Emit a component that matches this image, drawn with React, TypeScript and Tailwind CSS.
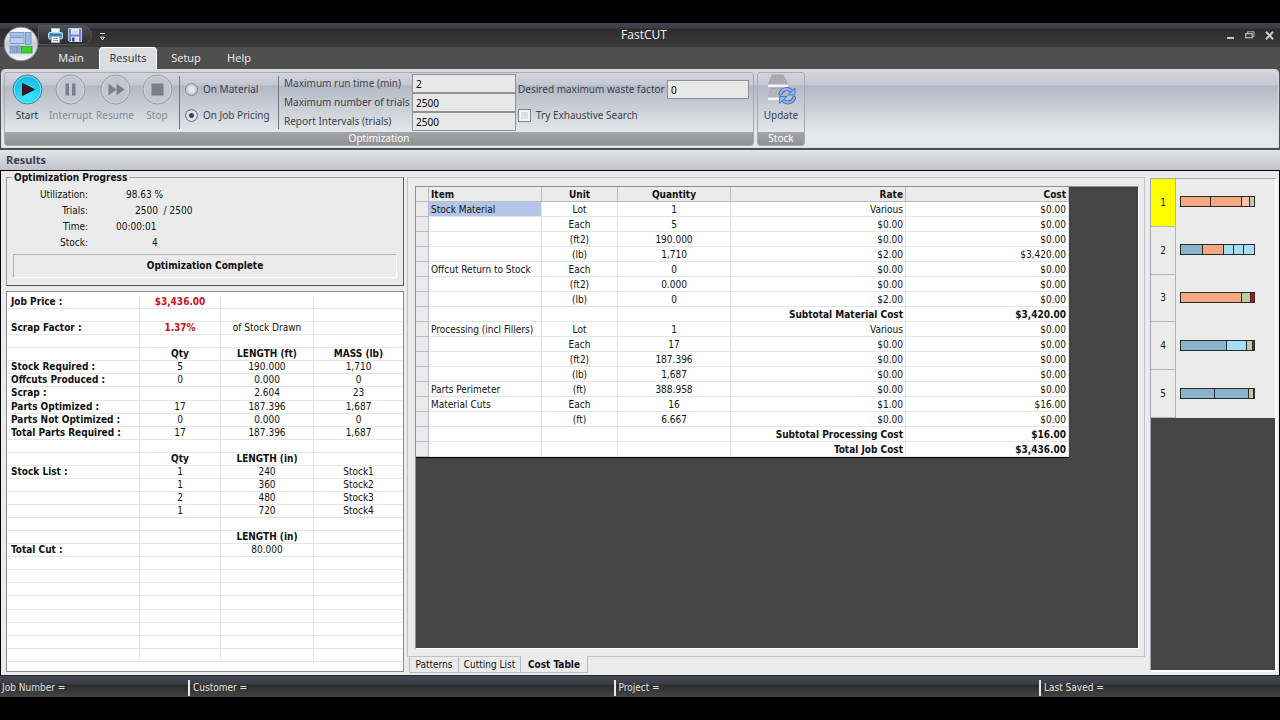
import { useState } from 'react'
import type { ReactNode } from 'react'

type SummaryRow = { label?: string; cells?: string[]; kind?: 'head' | 'alert' }

const SUMMARY: SummaryRow[] = [
  { label: 'Job Price :', cells: ['$3,436.00'], kind: 'alert' },
  {},
  { label: 'Scrap Factor :', cells: ['1.37%', 'of Stock Drawn'], kind: 'alert' },
  {},
  { cells: ['Qty', 'LENGTH (ft)', 'MASS (lb)'], kind: 'head' },
  { label: 'Stock Required :', cells: ['5', '190.000', '1,710'] },
  { label: 'Offcuts Produced :', cells: ['0', '0.000', '0'] },
  { label: 'Scrap :', cells: ['', '2.604', '23'] },
  { label: 'Parts Optimized :', cells: ['17', '187.396', '1,687'] },
  { label: 'Parts Not Optimized :', cells: ['0', '0.000', '0'] },
  { label: 'Total Parts Required :', cells: ['17', '187.396', '1,687'] },
  {},
  { cells: ['Qty', 'LENGTH (in)'], kind: 'head' },
  { label: 'Stock List :', cells: ['1', '240', 'Stock1'] },
  { cells: ['1', '360', 'Stock2'] },
  { cells: ['2', '480', 'Stock3'] },
  { cells: ['1', '720', 'Stock4'] },
  {},
  { cells: ['', 'LENGTH (in)'], kind: 'head' },
  { label: 'Total Cut :', cells: ['', '80.000'] },
  {}, {}, {}, {}, {}, {}, {}, {},
]

// item, unit, quantity, rate, cost
const COSTS: string[][] = [
  ['Stock Material', 'Lot', '1', 'Various', '$0.00'],
  ['', 'Each', '5', '$0.00', '$0.00'],
  ['', '(ft2)', '190.000', '$0.00', '$0.00'],
  ['', '(lb)', '1,710', '$2.00', '$3,420.00'],
  ['Offcut Return to Stock', 'Each', '0', '$0.00', '$0.00'],
  ['', '(ft2)', '0.000', '$0.00', '$0.00'],
  ['', '(lb)', '0', '$2.00', '$0.00'],
  ['', '', '', 'Subtotal Material Cost', '$3,420.00'],
  ['Processing (incl Fillers)', 'Lot', '1', 'Various', '$0.00'],
  ['', 'Each', '17', '$0.00', '$0.00'],
  ['', '(ft2)', '187.396', '$0.00', '$0.00'],
  ['', '(lb)', '1,687', '$0.00', '$0.00'],
  ['Parts Perimeter', '(ft)', '388.958', '$0.00', '$0.00'],
  ['Material Cuts', 'Each', '16', '$1.00', '$16.00'],
  ['', '(ft)', '6.667', '$0.00', '$0.00'],
  ['', '', '', 'Subtotal Processing Cost', '$16.00'],
  ['', '', '', 'Total Job Cost', '$3,436.00'],
]

const ORANGE = '#f4a981'
const BLUE = '#8ab4cb'
const SKY = '#a3def3'
const GREEN = '#bccba4'
const RED = '#d9040f'

// each segment is [width, colour] on a 74 unit bar
const PATTERNS: [number, string][][] = [
  [[30, ORANGE], [31, ORANGE], [8, '#f9c0ab'], [5, GREEN]],
  [[22, BLUE], [21, ORANGE], [10, SKY], [10, SKY], [11, SKY]],
  [[61, ORANGE], [9, GREEN], [4, RED]],
  [[46, BLUE], [20, SKY], [6, GREEN], [2, '#c01018']],
  [[34, BLUE], [34, BLUE], [5, GREEN], [1, '#222222']],
]

const PROGRESS = [
  { label: 'Utilization:', value: '98.63 %', pad: 'pl-[38px]' },
  { label: 'Trials:', value: '2500  / 2500', pad: 'pl-[47px]' },
  { label: 'Time:', value: '00:00:01', pad: 'pl-[28px]' },
  { label: 'Stock:', value: '4', pad: 'pl-[64px]' },
]

function PatternBar({ parts }: { parts: [number, string][] }) {
  let x = 0
  return (
    <svg className="w-[75px] h-[11px]" viewBox="0 0 75 11" shapeRendering="crispEdges">
      {parts.map(([w, fill], i) => {
        const left = x
        x += w
        return <rect key={i} x={left + 0.5} y={0.5} width={w} height={10} fill={fill} stroke="#2a2a2a" />
      })}
    </svg>
  )
}

function RoundButton({ label, active, width, children }: { label: string; active?: boolean; width: string; children: ReactNode }) {
  return (
    <button type="button" disabled={!active} className={`${width} flex flex-col items-center gap-[2px] pt-[1px] whitespace-nowrap ${active ? 'text-[#2f343d]' : 'text-[#868b93]'}`}>
      <svg className="w-[31px] h-[31px]" viewBox="0 0 31 31">
        <defs>
          <radialGradient id="cyan" cx="50%" cy="75%" r="70%">
            <stop offset="0" stopColor="#3be8ff" />
            <stop offset="1" stopColor="#19b9e0" />
          </radialGradient>
        </defs>
        <circle cx="15.5" cy="15.5" r="14.5" fill={active ? 'url(#cyan)' : '#c2c6ce'} stroke={active ? '#4d7f90' : '#989da6'} />
        <circle cx="15.5" cy="15.5" r="13.3" fill="none" stroke={active ? '#8df2ff' : '#d5d8de'} strokeOpacity="0.7" />
        {children}
      </svg>
      <span className="leading-4">{label}</span>
    </button>
  )
}

function AppOrb() {
  return (
    <svg className="w-9 h-9" viewBox="0 0 36 36">
      <defs>
        <linearGradient id="orb" x1="0" y1="0" x2="0" y2="1">
          <stop offset="0" stopColor="#ffffff" />
          <stop offset="0.5" stopColor="#c9ccd2" />
          <stop offset="1" stopColor="#f4f5f7" />
        </linearGradient>
      </defs>
      <circle cx="18" cy="18" r="16.8" fill="url(#orb)" stroke="#8d9097" />
      <g stroke="#6f8fbd" strokeWidth="0.8">
        <rect x="7" y="6.500" width="14" height="3.600" fill="#a9c3ea" />
        <rect x="7" y="11.500" width="14" height="6" fill="#b9cff0" />
        <rect x="22.500" y="6.500" width="5.500" height="12" fill="#9db9e2" />
        <rect x="7" y="20" width="3" height="7" fill="#8fb0de" />
        <rect x="11" y="20" width="2.600" height="7" fill="#8fb0de" />
        <rect x="14.600" y="20" width="2.600" height="7" fill="#8fb0de" />
      </g>
      <rect x="18.500" y="20.500" width="10.500" height="6.500" fill="#3fd32b" stroke="#2a9a22" strokeWidth="0.8" />
    </svg>
  )
}

function PrinterIcon() {
  return (
    <svg className="w-[15px] h-[15px]" viewBox="0 0 15 15">
      <rect x="3.5" y="0.5" width="8" height="5" fill="#f2f8fd" stroke="#9cc3e0" />
      <rect x="0.5" y="4.5" width="14" height="6.5" rx="1.5" fill="#5aa3d0" stroke="#bfe0f4" />
      <path d="M2 7h11" stroke="#20506f" />
      <rect x="3.5" y="8.5" width="8" height="6" fill="#ffffff" stroke="#8db8d6" />
      <path d="M5 10.5h5M5 12.5h5" stroke="#6fa6ca" />
    </svg>
  )
}

function SaveIcon() {
  return (
    <svg className="w-[14px] h-[14px]" viewBox="0 0 14 14">
      <path d="M.5.5h13v13h-12l-1-1z" fill="#6b83d6" stroke="#b9c6f2" />
      <rect x="3" y="1" width="8" height="5.5" fill="#eef2fc" />
      <path d="M4 3h6M4 5h6" stroke="#a9b5dc" strokeWidth="0.8" />
      <rect x="3" y="8.5" width="8" height="5" fill="#dfe4f4" />
      <rect x="4" y="9.5" width="2.5" height="4" fill="#3b4b93" />
    </svg>
  )
}

function UpdateIcon() {
  return (
    <svg className="w-[31px] h-[31px]" viewBox="0 0 31 31">
      <path d="M6 1h11l5 9.500H2z" fill="#a9acb2" stroke="#95989e" strokeWidth="0.600" />
      <path d="M2 10.500h20v2.500H2z" fill="#f5f6f7" />
      <path d="M5.500 14.500h11l4 9H2z" fill="#b3b6bc" stroke="#9b9ea4" strokeWidth="0.600" />
      <path d="M2 23.500h15v2.500H2z" fill="#f5f6f7" />
      <g fill="none" strokeLinecap="round">
        <path d="M14.500 19.500c1.500-5 8.500-6 11.500-1.500M28 24c-1.500 5-8.500 6-11.500 1.500" stroke="#4068b8" strokeWidth="4" />
        <path d="M14.500 19.500c1.500-5 8.500-6 11.500-1.500M28 24c-1.500 5-8.500 6-11.500 1.500" stroke="#8fb1ee" strokeWidth="2.200" />
      </g>
      <path d="M29 14v7h-7.500zM13.500 29.500v-7H21z" fill="#8fb1ee" stroke="#4068b8" strokeWidth="0.800" />
    </svg>
  )
}

function Ribbon() {
  const [mode, setMode] = useState('pricing')
  const field = 'h-[19px] w-full min-w-0 border border-[#8f9196] bg-[#e8e8e8] px-[3px] text-black outline-none'
  const radio = 'appearance-none size-[13px] rounded-full border border-[#7f858f] bg-[#e3e6ea] shadow-[inset_0_0_0_2px_#c8ccd3] checked:bg-[#2f4968] checked:shadow-[inset_0_0_0_3px_#dfe3e8]'

  return (
    <section className="flex gap-[3px] h-[79px] pl-[2px] pt-[2px] pb-[1px] mx-[1px] rounded-t-[4px] border border-[#dcdee2] bg-[linear-gradient(#d6d8dd_0px,#c4c8d2_15px,#b4b8c5_16px,#e2e8ea_62px,#e4eaeb_100%)] font-['Noto_Sans',sans-serif] text-[10px] text-[#3c414a]">
      <div className="w-[750px] flex flex-col border border-[#a7abb3] rounded-[3px] overflow-hidden">
        <div className="flex-1 flex">
          <RoundButton label="Start" active width="w-11">
            <path d="M10.500 9.500v12l12-6z" fill="#4a1020" stroke="#1c1c24" />
          </RoundButton>
          <RoundButton label="Interrupt" width="w-[43px]">
            <path d="M10.500 9.500h3.500v12h-3.500zM17 9.500h3.500v12H17z" fill="#7a7f89" />
          </RoundButton>
          <RoundButton label="Resume" width="w-[46px]">
            <path d="M8.500 9.500v12l8-6zM16.500 9.500v12l8-6z" fill="#7a7f89" />
          </RoundButton>
          <RoundButton label="Stop" width="w-[38px]">
            <path d="M9.500 9.500h12v12h-12z" fill="#7a7f89" />
          </RoundButton>

          <div className="my-[3px] ml-[3px] pl-[5px] w-[100px] border-l border-r border-[#6f747d] flex flex-col justify-around">
            <label className="flex items-center gap-[5px] whitespace-nowrap">
              <input type="radio" name="mode" className={radio} checked={mode === 'material'} onChange={() => setMode('material')} />
              On Material
            </label>
            <label className="flex items-center gap-[5px] whitespace-nowrap">
              <input type="radio" name="mode" className={radio} checked={mode === 'pricing'} onChange={() => setMode('pricing')} />
              On Job Pricing
            </label>
          </div>

          <div className="pl-[5px] w-[237px] grid grid-cols-[128px_1fr] content-center items-center whitespace-nowrap">
            <label htmlFor="runtime">Maximum run time (min)</label>
            <input id="runtime" className={field} defaultValue="2" />
            <label htmlFor="trials">Maximum number of trials</label>
            <input id="trials" className={field} defaultValue="2500" />
            <label htmlFor="report">Report Intervals (trials)</label>
            <input id="report" className={field} defaultValue="2500" />
          </div>

          <div className="flex-1 pl-[2px] pr-1 pt-[7px] flex flex-col gap-[9px] whitespace-nowrap">
            <div className="grid grid-cols-[149px_1fr] items-center">
              <label htmlFor="waste">Desired maximum waste factor</label>
              <input id="waste" className={field} defaultValue="0" />
            </div>
            <label className="flex items-center gap-[5px]">
              <input type="checkbox" className="appearance-none size-[13px] border border-[#7f858f] bg-[#dcdfe3] shadow-[inset_0_0_0_2px_#f4f4f4] checked:bg-[#2f4968]" />
              Try Exhaustive Search
            </label>
          </div>
        </div>
        <div className="h-[13px] leading-[12px] text-center text-white bg-linear-to-b from-[#a3a5a7] to-[#8f9193]">Optimization</div>
      </div>

      <div className="w-12 flex flex-col border border-[#a7abb3] rounded-[3px] overflow-hidden">
        <button type="button" className="flex-1 flex flex-col items-center gap-[2px] pt-[1px]">
          <UpdateIcon />
          <span className="leading-4">Update</span>
        </button>
        <div className="h-[13px] leading-[12px] text-center text-white bg-linear-to-b from-[#a3a5a7] to-[#8f9193]">Stock</div>
      </div>
    </section>
  )
}

function TitleBar() {
  return (
    <header className="relative font-['Open_Sans',sans-serif] text-[11px] text-[#f2f2f2]">
      <div className="absolute left-[3px] top-[3px]"><AppOrb /></div>
      <div className="h-6 grid grid-cols-[1fr_auto_1fr] items-center bg-[linear-gradient(#40444f_0px,#3b3e47_5px,#2c2c2d_6px,#3c3c3d_100%)]">
        <div className="flex items-center gap-2 pl-[38px]">
          <div className="flex items-center gap-[5px] h-5 w-[54px] pl-[9px] rounded-r-full border border-[#55565a] bg-linear-to-b from-[#505156] to-[#2d2d2e]">
            <button type="button" aria-label="Print"><PrinterIcon /></button>
            <button type="button" aria-label="Save"><SaveIcon /></button>
          </div>
          <button type="button" aria-label="Customize toolbar" className="pt-1">
            <svg className="w-[5px] h-[8px]" viewBox="0 0 5 8">
              <path d="M0 .5h5M.5 4h4L2.500 7z" fill="none" stroke="#dddddd" />
            </svg>
          </button>
        </div>
        <h1 className="pl-2 text-xs">FastCUT</h1>
        <div className="flex justify-end items-center gap-[10px] pr-[6px]">
          <button type="button" aria-label="Minimize">
            <svg className="w-[9px] h-[9px]" viewBox="0 0 9 9"><path d="M1 7h7" stroke="#c6c6c6" strokeWidth="2" /></svg>
          </button>
          <button type="button" aria-label="Restore">
            <svg className="w-[10px] h-[9px]" viewBox="0 0 10 9" fill="none" stroke="#b5b5b5">
              <path d="M2.500 2V.8h6.500v4.700H7.500" />
              <rect x="0.700" y="2.700" width="6.500" height="4" strokeWidth="1.300" />
            </svg>
          </button>
          <button type="button" aria-label="Close">
            <svg className="w-[9px] h-[9px]" viewBox="0 0 9 9"><path d="M1 0.800l7 7.400M8 .8L1 8.200" stroke="#cfcfcf" strokeWidth="2" /></svg>
          </button>
        </div>
      </div>
      <nav className="h-[22px] flex items-stretch pl-[43px]">
        <button type="button" className="w-14">Main</button>
        <button type="button" className="w-[58px] rounded-t-[4px] border border-b-0 border-white bg-[#dcdde1] text-[#2b2f38]">Results</button>
        <button type="button" className="w-[58px]">Setup</button>
        <button type="button" className="w-12">Help</button>
      </nav>
    </header>
  )
}

function SummaryPanel() {
  return (
    <div className="flex flex-col gap-[5px] w-[398px] py-[3px]">
      <fieldset className="mt-[-4px] h-[116px] border border-[#55575b] border-t-[#9a9ba0] border-l-[#9a9ba0] px-[6px]">
        <legend className="ml-[-1px] px-[2px] leading-[15px] font-bold">Optimization Progress</legend>
        <dl className="mt-[2px] grid grid-cols-[75px_1fr] leading-[16px]">
          {PROGRESS.map((p) => (
            <div key={p.label} className="contents">
              <dt className="text-right">{p.label}</dt>
              <dd className={`${p.pad} whitespace-pre`}>{p.value}</dd>
            </div>
          ))}
        </dl>
        <p className="mt-[3px] h-6 leading-[22px] text-center font-bold border border-white border-t-[#b0b2b8] border-l-[#b0b2b8]">Optimization Complete</p>
      </fieldset>

      <div className="flex-1 bg-white border border-[#8a8c92] pt-[4px]">
        <table className="w-full h-[366px] table-fixed border-separate border-spacing-0 leading-3">
          <colgroup>
            <col className="w-[133px]" />
            <col className="w-[81px]" />
            <col className="w-[93px]" />
            <col />
          </colgroup>
          <tbody>
            {SUMMARY.map((row, i) => (
              <tr key={i}>
                <th className="h-[13px] border-b border-r border-[#e6e6e6] pl-1 py-0 text-left font-bold whitespace-nowrap">{row.label}</th>
                {[0, 1, 2].map((c) => {
                  const bold = row.kind === 'head' || (row.kind === 'alert' && c === 0)
                  const red = row.kind === 'alert' && c === 0
                  return (
                    <td key={c} className={`border-b border-r last:border-r-0 border-[#e6e6e6] p-0 text-center whitespace-nowrap ${bold ? 'font-bold' : ''} ${red ? 'text-[#cc1018]' : ''}`}>
                      {row.cells?.[c]}
                    </td>
                  )
                })}
              </tr>
            ))}
          </tbody>
        </table>
      </div>
    </div>
  )
}

function CostTable() {
  const head = 'border-r border-b border-[#b9bcc6] p-0 pt-[1px] font-bold'
  const cell = 'border-r border-b border-[#e4e7e8] p-0 pt-[1px] whitespace-nowrap'
  return (
    <div className="flex-1 flex flex-col pt-[6px]">
      <div className="flex-1 border border-[#bfc1c9] p-[7px] pt-[8px] pr-[5px]">
        <div className="h-full border border-white border-t-[#8b8f99] border-l-[#8b8f99] bg-[#454545]">
          <table className="table-fixed w-[653px] border-separate border-spacing-0 bg-white leading-[13px] border-b border-black">
            <colgroup>
              <col className="w-[13px]" />
              <col className="w-[113px]" />
              <col className="w-[76px]" />
              <col className="w-[113px]" />
              <col className="w-[175px]" />
              <col className="w-[163px]" />
            </colgroup>
            <thead className="bg-[#ebebeb]">
              <tr>
                <th className={head} />
                <th className={`${head} pl-[2px] text-left`}>Item</th>
                <th className={head}>Unit</th>
                <th className={head}>Quantity</th>
                <th className={`${head} pr-[2px] text-right`}>Rate</th>
                <th className={`${head} pr-[2px] text-right`}>Cost</th>
              </tr>
            </thead>
            <tbody>
              {COSTS.map(([item, unit, qty, rate, cost], i) => {
                const total = rate.includes('Cost') ? 'font-bold' : ''
                return (
                  <tr key={i}>
                    <td className="h-[15px] border-r border-b border-[#b9bcc6] bg-[#ebebeb] p-0" />
                    <td className={`${cell} pl-[2px] ${i === 0 ? 'bg-[#b4c6e7]' : ''}`}>{item}</td>
                    <td className={`${cell} text-center`}>{unit}</td>
                    <td className={`${cell} text-center`}>{qty}</td>
                    <td className={`${cell} pr-[2px] text-right ${total}`}>{rate}</td>
                    <td className={`${cell} pr-[2px] text-right ${total}`}>{cost}</td>
                  </tr>
                )
              })}
            </tbody>
          </table>
        </div>
      </div>
      <nav className="h-[18px] flex pl-[2px] pb-[2px]">
        <button type="button" className="w-[50px] border border-t-0 border-[#b9bbc4]">Patterns</button>
        <button type="button" className="w-[62px] border border-t-0 border-l-0 border-[#b9bbc4]">Cutting List</button>
        <button type="button" className="mt-[-1px] w-[67px] border border-t-0 border-l-0 border-[#b9bbc4] bg-[#ebebeb] font-bold">Cost Table</button>
      </nav>
    </div>
  )
}

function PatternList() {
  const [selected, setSelected] = useState(0)
  return (
    <div className="w-[127px] my-[7px] mb-[3px] border-2 border-white border-t-[#a3a5b6] border-l-[#a3a5b6] border-t-1 border-l-1 bg-[#454545]">
      <ol className="h-[239px] grid grid-rows-5 bg-[#ebebeb] text-[#222222]">
        {PATTERNS.map((parts, i) => (
          <li key={i} className="min-h-0">
            <button type="button" onClick={() => setSelected(i)} className="h-full w-full flex items-center">
              <span className={`w-[25px] h-full grid place-items-center border-b border-r border-[#b0b3be] ${i === selected ? 'bg-[#ffff00]' : ''}`}>{i + 1}</span>
              <span className="pl-1 pb-[2px] flex"><PatternBar parts={parts} /></span>
            </button>
          </li>
        ))}
      </ol>
    </div>
  )
}

export default function App() {
  return (
    <div className="min-h-screen bg-black py-[23px] flex flex-col font-['DejaVu_Sans_Condensed','DejaVu_Sans',sans-serif] text-[10px] text-[#111111]">
      <div className="flex-1 flex flex-col bg-[#4f4f4f]">
        <TitleBar />
        <Ribbon />

        <h2 className="mt-[2px] h-5 pl-[6px] leading-5 font-['Noto_Sans',sans-serif] text-[11px] font-bold text-[#3b4350] bg-linear-to-b from-[#e4e5e9] to-[#bfc3ca]">Results</h2>

        <main className="flex-1 flex border border-black border-b-0 bg-[#ebebeb] pl-[5px] pr-[2px]">
          <SummaryPanel />
          <div className="w-[3px]" />
          <CostTable />
          <div className="w-[5px]" />
          <PatternList />
        </main>

        <footer className="h-[22px] flex items-center pl-[2px] pt-[2px] leading-4 border-t border-[#25262a] bg-[linear-gradient(#444853_0px,#3b3e47_8px,#2c2c2d_9px,#444444_100%)] text-[#e4e4e4]">
          <span className="w-[186px]">Job Number =</span>
          <span className="flex-1 pl-[3px] border-l-2 border-[#e8e8e8]">Customer =</span>
          <span className="flex-1 pl-[3px] border-l-2 border-[#e8e8e8]">Project =</span>
          <span className="w-[241px] pl-[3px] border-l-2 border-[#e8e8e8]">Last Saved =</span>
        </footer>
      </div>
    </div>
  )
}
